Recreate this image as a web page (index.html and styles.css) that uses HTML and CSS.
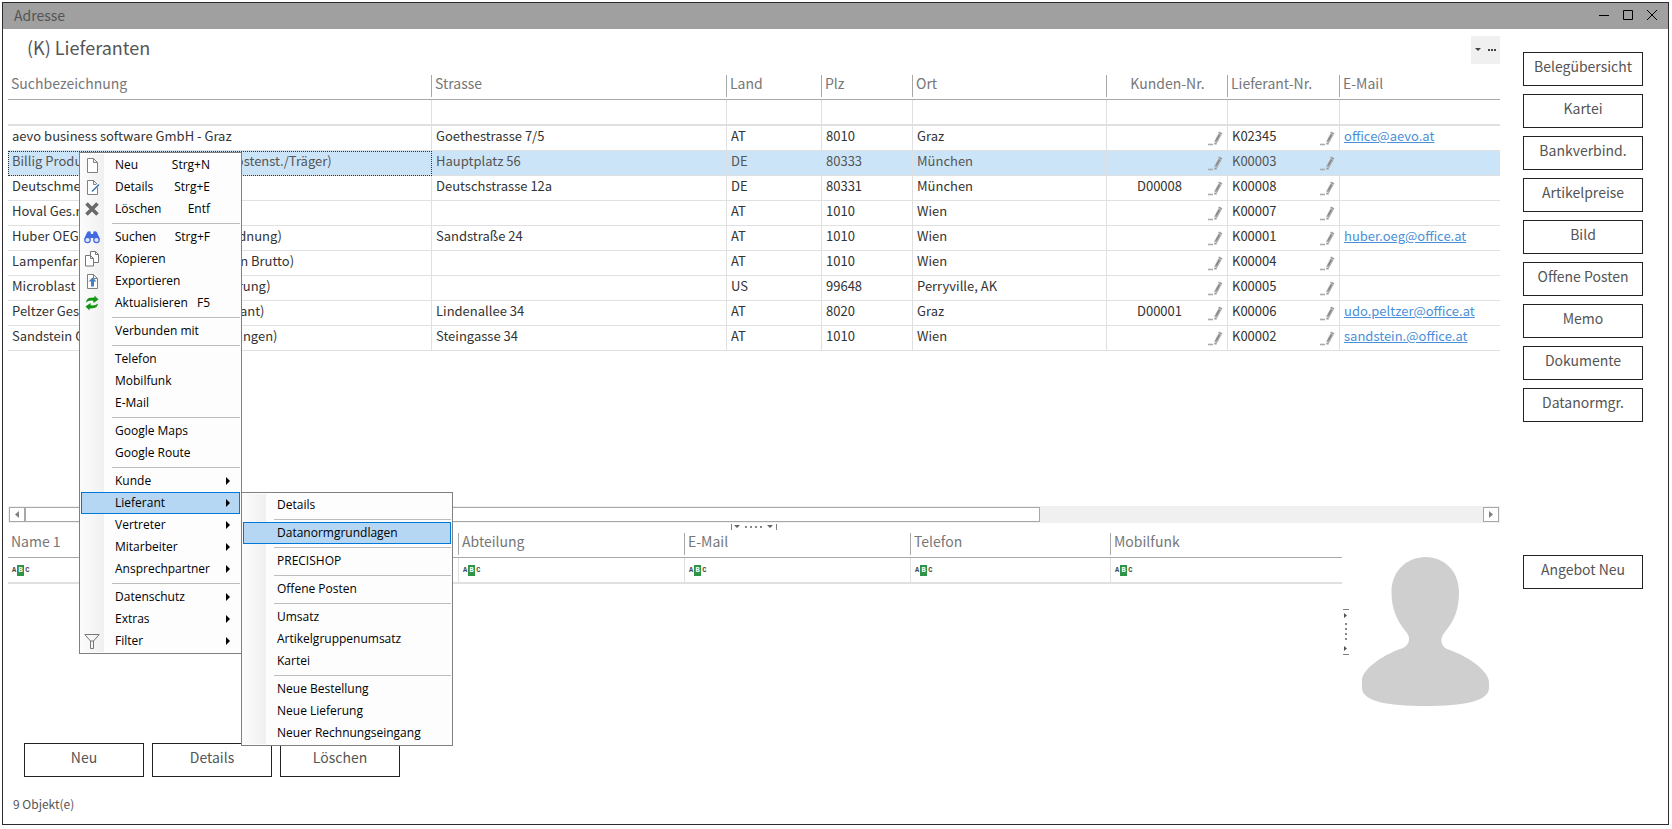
FILE: index.html
```html
<!DOCTYPE html>
<html lang="de">
<head>
<meta charset="utf-8">
<title>Adresse</title>
<link rel="stylesheet" href="styles.css">
</head>
<body>
<svg class="defs" aria-hidden="true">
  <symbol id="i-pen" viewBox="0 0 15 15"><path d="M0 13.5h5" stroke="#aaa" stroke-width="1.6"/><path d="M6.3 12.6h2.4" stroke="#999" stroke-width="1.8"/><path d="M7.6 11.2 12 3.2" stroke="#aaa" stroke-width="3.4"/><path d="M8.2 9.4 11.6 3.6" stroke="#777" stroke-width="1"/><path d="M10.6 1.2 14 3" stroke="#999" stroke-width="1.6"/></symbol>
  <symbol id="i-page" viewBox="0 0 16 16"><path d="M3.5 1.5h6l4 4v10h-10zM9.5 1.5v4h4" fill="#fff" stroke="#808080"/></symbol>
</svg>
<div class="window">
  <header class="titlebar">
    <span>Adresse</span>
    <div class="winctl">
      <button type="button" aria-label="Minimieren"><svg width="12" height="12" viewBox="0 0 12 12"><path d="M1 6.5h10" stroke="#000"/></svg></button>
      <button type="button" aria-label="Maximieren"><svg width="12" height="12" viewBox="0 0 12 12"><path d="M1.5 1.5h9v9h-9z" fill="none" stroke="#000"/></svg></button>
      <button type="button" aria-label="Schließen"><svg width="12" height="12" viewBox="0 0 12 12"><path d="M1 1l10 10M11 1L1 11" stroke="#000"/></svg></button>
    </div>
  </header>
  <main class="content">
    <section class="upper">
      <div class="heading">
        <h1>(K) Lieferanten</h1>
        <button type="button" class="more" aria-label="Optionen"><svg width="22" height="8" viewBox="0 0 22 8"><path d="M0 2h6L3 5z" fill="#444"/><path d="M13 3h2v2h-2zM16 3h2v2h-2zM19 3h2v2h-2z" fill="#444"/></svg></button>
      </div>
      <table class="grid">
        <colgroup><col><col class="w-str"><col class="w-land"><col class="w-plz"><col class="w-ort"><col class="w-kd"><col class="w-lf"><col class="w-mail"></colgroup>
        <thead>
          <tr><th>Suchbezeichnung</th><th>Strasse</th><th>Land</th><th>Plz</th><th>Ort</th><th class="mid">Kunden-Nr.</th><th>Lieferant-Nr.</th><th>E-Mail</th></tr>
          <tr class="filter"><td><input aria-label="Filter Suchbezeichnung"></td><td><input aria-label="Filter Strasse"></td><td><input aria-label="Filter Land"></td><td><input aria-label="Filter Plz"></td><td><input aria-label="Filter Ort"></td><td><input aria-label="Filter Kunden-Nr."></td><td><input aria-label="Filter Lieferant-Nr."></td><td><input aria-label="Filter E-Mail"></td></tr>
        </thead>
        <tbody>
          <tr><td>aevo business software GmbH - Graz</td><td>Goethestrasse 7/5</td><td>AT</td><td>8010</td><td>Graz</td><td><div class="num mid"><span></span><svg><use href="#i-pen"/></svg></div></td><td><div class="num"><span>K02345</span><svg><use href="#i-pen"/></svg></div></td><td><a href="#">office@aevo.at</a></td></tr>
          <tr class="selected"><td class="focus">Billig Produktionen GmbH (Projekt, Kostenst./Träger)</td><td>Hauptplatz 56</td><td>DE</td><td>80333</td><td>München</td><td><div class="num mid"><span></span><svg><use href="#i-pen"/></svg></div></td><td><div class="num"><span>K00003</span><svg><use href="#i-pen"/></svg></div></td><td></td></tr>
          <tr><td>Deutschmeister GmbH</td><td>Deutschstrasse 12a</td><td>DE</td><td>80331</td><td>München</td><td><div class="num mid"><span>D00008</span><svg><use href="#i-pen"/></svg></div></td><td><div class="num"><span>K00008</span><svg><use href="#i-pen"/></svg></div></td><td></td></tr>
          <tr><td>Hoval Ges.m.b.H.</td><td></td><td>AT</td><td>1010</td><td>Wien</td><td><div class="num mid"><span></span><svg><use href="#i-pen"/></svg></div></td><td><div class="num"><span>K00007</span><svg><use href="#i-pen"/></svg></div></td><td></td></tr>
          <tr><td>Huber OEG Wien (mit Lieferantenzuordnung)</td><td>Sandstraße 24</td><td>AT</td><td>1010</td><td>Wien</td><td><div class="num mid"><span></span><svg><use href="#i-pen"/></svg></div></td><td><div class="num"><span>K00001</span><svg><use href="#i-pen"/></svg></div></td><td><a href="#">huber.oeg@office.at</a></td></tr>
          <tr><td>Lampenfarm Wien GmbH (alle Preise in Brutto)</td><td></td><td>AT</td><td>1010</td><td>Wien</td><td><div class="num mid"><span></span><svg><use href="#i-pen"/></svg></div></td><td><div class="num"><span>K00004</span><svg><use href="#i-pen"/></svg></div></td><td></td></tr>
          <tr><td>Microblast Inc. Alaska (mit Fremdwährung)</td><td></td><td>US</td><td>99648</td><td>Perryville, AK</td><td><div class="num mid"><span></span><svg><use href="#i-pen"/></svg></div></td><td><div class="num"><span>K00005</span><svg><use href="#i-pen"/></svg></div></td><td></td></tr>
          <tr><td>Peltzer Ges.m.b.H. Graz (Kunde, Lieferant)</td><td>Lindenallee 34</td><td>AT</td><td>8020</td><td>Graz</td><td><div class="num mid"><span>D00001</span><svg><use href="#i-pen"/></svg></div></td><td><div class="num"><span>K00006</span><svg><use href="#i-pen"/></svg></div></td><td><a href="#">udo.peltzer@office.at</a></td></tr>
          <tr><td>Sandstein GmbH Wien (inkl. Teillieferungen)</td><td>Steingasse 34</td><td>AT</td><td>1010</td><td>Wien</td><td><div class="num mid"><span></span><svg><use href="#i-pen"/></svg></div></td><td><div class="num"><span>K00002</span><svg><use href="#i-pen"/></svg></div></td><td><a href="#">sandstein.@office.at</a></td></tr>
        </tbody>
      </table>
      <div class="hscroll">
        <button type="button" aria-label="Nach links"><svg width="6" height="7" viewBox="0 0 6 7"><path d="M5 0v7L1 3.500z" fill="#808080"/></svg></button>
        <div class="track"><div class="thumb"></div></div>
        <button type="button" aria-label="Nach rechts"><svg width="6" height="7" viewBox="0 0 6 7"><path d="M1 0v7L5 3.500z" fill="#808080"/></svg></button>
      </div>
    </section>
    <nav class="side side-top">
      <button type="button" class="btn">Belegübersicht</button>
      <button type="button" class="btn">Kartei</button>
      <button type="button" class="btn">Bankverbind.</button>
      <button type="button" class="btn">Artikelpreise</button>
      <button type="button" class="btn">Bild</button>
      <button type="button" class="btn">Offene Posten</button>
      <button type="button" class="btn">Memo</button>
      <button type="button" class="btn">Dokumente</button>
      <button type="button" class="btn">Datanormgr.</button>
    </nav>
    <section class="lower">
      <div class="hsplit"><svg width="46" height="7" viewBox="0 0 46 7"><path d="M.5 1v6M45.500 1v6" stroke="#808080"/><path d="M3 2h6L6 5zM36 2h6l-3 3z" fill="#666"/><path d="M14 3h2v2h-2zM19 3h2v2h-2zM24 3h2v2h-2zM29 3h2v2h-2z" fill="#888"/></svg></div>
      <div class="contacts">
        <table class="grid">
          <colgroup><col><col class="w-abt"><col class="w-abt"><col class="w-tel"><col class="w-mob"></colgroup>
          <thead>
            <tr><th>Name 1</th><th>Abteilung</th><th>E-Mail</th><th>Telefon</th><th>Mobilfunk</th></tr>
            <tr class="filter">
              <td><label class="abc"><span>A<b>B</b>C</span><input aria-label="Filter Name 1"></label></td>
              <td><label class="abc"><span>A<b>B</b>C</span><input aria-label="Filter Abteilung"></label></td>
              <td><label class="abc"><span>A<b>B</b>C</span><input aria-label="Filter E-Mail"></label></td>
              <td><label class="abc"><span>A<b>B</b>C</span><input aria-label="Filter Telefon"></label></td>
              <td><label class="abc"><span>A<b>B</b>C</span><input aria-label="Filter Mobilfunk"></label></td>
            </tr>
          </thead>
        </table>
        <div class="vsplit"><svg width="7" height="46" viewBox="0 0 7 46"><path d="M0 .5h6M0 45.500h6" stroke="#808080"/><path d="M1 4v5l3-2.500zM1 37v5l3-2.500z" fill="#555"/><path d="M2 14h2v2H2zM2 19h2v2H2zM2 24h2v2H2zM2 29h2v2H2z" fill="#888"/></svg></div>
        <div class="avatar"><svg width="127" height="149" viewBox="0 0 127 149"><path fill="#cfcfcf" d="M63.500 0C82 0 97 14 97 35c0 18-5 29-14 40-6 7-4 14 2 17 26 9 42 24 42 33v6c0 13-25 18-63.500 18S0 144 0 131v-8c0-9 17-24 41-32 6-3 8-9 4-15C35 64 29.500 52 29.500 35 29.500 14 45 0 63.500 0z"/></svg></div>
      </div>
    </section>
    <div class="side side-low"><button type="button" class="btn">Angebot Neu</button></div>
  </main>
  <footer class="foot">
    <div class="actions">
      <button type="button" class="btn">Neu</button>
      <button type="button" class="btn">Details</button>
      <button type="button" class="btn">Löschen</button>
    </div>
    <p class="status">9 Objekt(e)</p>
  </footer>

  <ul class="menu context">
    <li><button type="button"><svg class="ico" viewBox="0 0 16 16"><use href="#i-page"/></svg>Neu<kbd>Strg+N</kbd></button></li>
    <li><button type="button"><svg class="ico" viewBox="0 0 16 16"><use href="#i-page"/><path d="M7 12.500 15 5" stroke="#fff" stroke-width="3"/><path d="M8 12.500 15 5.500" stroke="#3c78b4" stroke-width="1.600"/></svg>Details<kbd>Strg+E</kbd></button></li>
    <li><button type="button"><svg class="ico" viewBox="0 0 16 16"><path d="M2.500 2.500l11 11M13.500 2.500l-11 11" stroke="#6a6a6a" stroke-width="3.600"/></svg>Löschen<kbd>Entf</kbd></button></li>
    <li class="sep"></li>
    <li><button type="button"><svg class="ico" viewBox="0 0 16 16"><path d="M3 3.500Q4 1.500 6.500 2.500L7 5h2l.5-2.500Q12 1.500 13 3.500l2.700 6V11H9.500V9h-3v2H.3V9.500z" fill="#4169e1"/><circle cx="3.500" cy="11" r="2.700" fill="#dfe6fb" stroke="#4169e1" stroke-width="1.200"/><circle cx="12.500" cy="11" r="2.700" fill="#dfe6fb" stroke="#4169e1" stroke-width="1.200"/></svg>Suchen<kbd>Strg+F</kbd></button></li>
    <li><button type="button"><svg class="ico" viewBox="0 0 16 16"><path d="M6.500 4.500v-4h5l3 3v8h-5" fill="#fff" stroke="#777"/><path d="M11.500.5v3h3" fill="none" stroke="#777"/><path d="M1.500 4.500h5l3 3v7.500h-8zM6.500 4.500v3h3" fill="#fff" stroke="#777"/></svg>Kopieren</button></li>
    <li><button type="button"><svg class="ico" viewBox="0 0 16 16"><use href="#i-page"/><path d="M8.500 4.500l4 4h-2.500v5H7v-5H4.500z" fill="#4a80bd"/></svg>Exportieren</button></li>
    <li><button type="button"><svg class="ico" viewBox="0 0 16 16"><path d="M2 7.500Q2.500 3 7 2.800L10.500 2.500V.5l4 4-5 3.500-.2-2.300Q5 5 2 7.500zM14 8.500Q13.500 13 9 13.200l-3.500.3v2l-4-4 5-3.500.2 2.300Q11 11 14 8.500z" fill="#149614"/></svg>Aktualisieren<kbd>F5</kbd></button></li>
    <li class="sep"></li>
    <li><button type="button">Verbunden mit</button></li>
    <li class="sep"></li>
    <li><button type="button">Telefon</button></li>
    <li><button type="button">Mobilfunk</button></li>
    <li><button type="button">E-Mail</button></li>
    <li class="sep"></li>
    <li><button type="button">Google Maps</button></li>
    <li><button type="button">Google Route</button></li>
    <li class="sep"></li>
    <li class="sub"><button type="button">Kunde</button></li>
    <li class="sub"><button type="button" class="active" aria-expanded="true">Lieferant</button>
      <ul class="menu submenu">
        <li><button type="button">Details</button></li>
        <li class="sep"></li>
        <li><button type="button" class="active">Datanormgrundlagen</button></li>
        <li class="sep"></li>
        <li><button type="button">PRECISHOP</button></li>
        <li class="sep"></li>
        <li><button type="button">Offene Posten</button></li>
        <li class="sep"></li>
        <li><button type="button">Umsatz</button></li>
        <li><button type="button">Artikelgruppenumsatz</button></li>
        <li><button type="button">Kartei</button></li>
        <li class="sep"></li>
        <li><button type="button">Neue Bestellung</button></li>
        <li><button type="button">Neue Lieferung</button></li>
        <li><button type="button">Neuer Rechnungseingang</button></li>
      </ul>
    </li>
    <li class="sub"><button type="button">Vertreter</button></li>
    <li class="sub"><button type="button">Mitarbeiter</button></li>
    <li class="sub"><button type="button">Ansprechpartner</button></li>
    <li class="sep"></li>
    <li class="sub"><button type="button">Datenschutz</button></li>
    <li class="sub"><button type="button">Extras</button></li>
    <li class="sub"><button type="button"><svg class="ico" viewBox="0 0 16 16"><path d="M.8 1.500h14.400L9.500 8v7.500h-3V8zM6.500 8h3" fill="none" stroke="#777"/></svg>Filter</button></li>
  </ul>
</div>
</body>
</html>
```
FILE: styles.css
```css
* { box-sizing: border-box; }
body {
  margin: 0;
  padding: 2px 3px 4px 2px;
  min-height: 100vh;
  display: flex;
  background: #fff;
  color: #333;
  font: 14px/20px "Noto Sans CJK SC", "Open Sans", sans-serif;
}
.defs { position: absolute; width: 0; height: 0; }
button, input { font: inherit; color: inherit; }
button { padding: 0; border: 0; background: none; cursor: pointer; }

.window {
  position: relative;
  flex: 1;
  min-width: 0;
  display: flex;
  flex-direction: column;
  border: 1px solid #2b2b30;
}
.titlebar {
  display: flex;
  justify-content: space-between;
  align-items: center;
  height: 26px;
  padding: 0 10px 2px 11px;
  background: #a0a0a0;
  color: #555;
}
.winctl { display: flex; gap: 12px; }
.winctl svg, .more svg, .hscroll svg { display: block; }

.content {
  flex: 1;
  display: grid;
  grid-template-columns: 1fr 120px;
  grid-template-rows: 1fr auto;
  column-gap: 23px;
  padding: 0 25px 0 5px;
}
.upper { display: flex; flex-direction: column; min-width: 0; }
.heading {
  display: flex;
  justify-content: space-between;
  height: 43px;
  padding: 7px 0 8px 19px;
}
h1 { margin: 0; font-size: 18px; line-height: 22px; font-weight: 400; color: #555; }
.more {
  display: flex;
  align-items: center;
  width: 29px;
  height: 28px;
  padding-left: 4px;
  background: #f0f0f0;
}

.grid { width: 100%; table-layout: fixed; border-collapse: separate; border-spacing: 0; }
.w-str { width: 295px; }
.w-land { width: 95px; }
.w-plz { width: 91px; }
.w-ort { width: 194px; }
.w-kd { width: 121px; }
.w-lf { width: 112px; }
.w-mail { width: 160px; }
.w-abt { width: 226px; }
.w-tel { width: 200px; }
.w-mob { width: 231px; }
.grid th {
  height: 28px;
  padding: 0 3px 5px;
  border-bottom: 1px solid #a8a8a8;
  background: linear-gradient(#a8a8a8, #a8a8a8) right 3px / 1px 22px no-repeat;
  color: #777;
  font-weight: 400;
  text-align: left;
  white-space: nowrap;
}
.grid th:last-child { background: none; }
.grid td {
  height: 25px;
  padding: 0 4px 4px;
  border-right: 1px solid #e0e0e0;
  border-bottom: 1px solid #e0e0e0;
  font-size: 13px;
  line-height: 18px;
  white-space: nowrap;
}
.grid td:last-child { border-right: 0; }
.grid .mid { text-align: center; }
.grid .filter td { height: 26px; padding: 0 4px; border-bottom-width: 2px; }
.filter input {
  display: block;
  width: 100%;
  min-width: 0;
  height: 20px;
  padding: 0;
  border: 0;
  outline: 0;
  background: none;
}
.selected td { background: #cce4f7; color: #555; }
.grid .focus { outline: 1px dotted #333; outline-offset: -1px; }
.num { display: flex; height: 18px; }
.num span { flex: 1; }
.num svg { flex: none; width: 15px; height: 15px; margin-top: 4px; }
a { color: #4a90d9; }

.hscroll {
  display: flex;
  margin-top: auto;
  padding: 1px;
  background: #f0f0f0;
}
.hscroll button {
  display: flex;
  align-items: center;
  justify-content: center;
  width: 16px;
  height: 15px;
  border: 1px solid #a8a8a8;
  background: #fff;
}
.track { flex: 1; }
.thumb { width: 69.6%; height: 15px; border: 1px solid #a8a8a8; background: #fff; }

.side { display: flex; flex-direction: column; gap: 8px; }
.side-top { padding-top: 23px; }
.side-low { padding-top: 32px; }
.btn {
  width: 120px;
  height: 34px;
  padding-bottom: 6px;
  border: 1px solid #222;
  background: #fff;
  color: #555;
}

.hsplit { height: 7px; }
.hsplit svg { display: block; margin: 0 auto; }
.contacts { display: flex; }
.contacts .grid { flex: 1; min-width: 0; align-self: flex-start; }
.vsplit { padding: 79px 0 0 1px; }
.vsplit svg, .avatar svg { display: block; }
.avatar { padding: 27px 11px 0 12px; }
.abc { display: flex; align-items: center; gap: 4px; }
.abc span {
  display: flex;
  align-items: center;
  gap: 1px;
  font: bold 7px/11px "Liberation Mono", monospace;
  color: #444;
}
.abc b { width: 7px; background: #2e9447; color: #fff; text-align: center; }

.foot { padding: 37px 10px 10px; }
.actions { display: flex; gap: 8px; padding-left: 11px; }
.status { margin: 17px 0 0; font-size: 12px; color: #555; }

.menu {
  position: absolute;
  margin: 0;
  padding: 1px;
  border: 1px solid #808080;
  list-style: none;
  background: linear-gradient(90deg, #fcfcfc, #f0f0f0) 0 1px / 24px calc(100% - 2px) no-repeat #fdfdfd;
  font: 12px/20px "Open Sans", sans-serif;
  color: #000;
}
.context { left: 76px; top: 149px; width: 163px; }
.submenu { left: calc(100% + 1px); top: 0; width: 212px; }
.menu li { position: relative; }
.menu button {
  display: flex;
  align-items: center;
  width: 100%;
  height: 22px;
  padding: 0 29px 0 33px;
  border: 1px solid transparent;
  white-space: nowrap;
}
.menu button.active { background: #b5d7f3; border-color: #0078d7; }
.menu .ico { flex: none; width: 16px; height: 16px; margin: 0 15px 0 -31px; }
.menu kbd { margin-left: auto; font: inherit; }
.menu .sep { height: 6px; margin-left: 31px; padding-top: 3px; }
.menu .sep::before { content: ""; display: block; height: 1px; background: #bdbdbd; }
.sub > button::after {
  content: "";
  position: absolute;
  right: 10px;
  border: 4px solid transparent;
  border-left-color: #000;
  border-right: 0;
}
```
